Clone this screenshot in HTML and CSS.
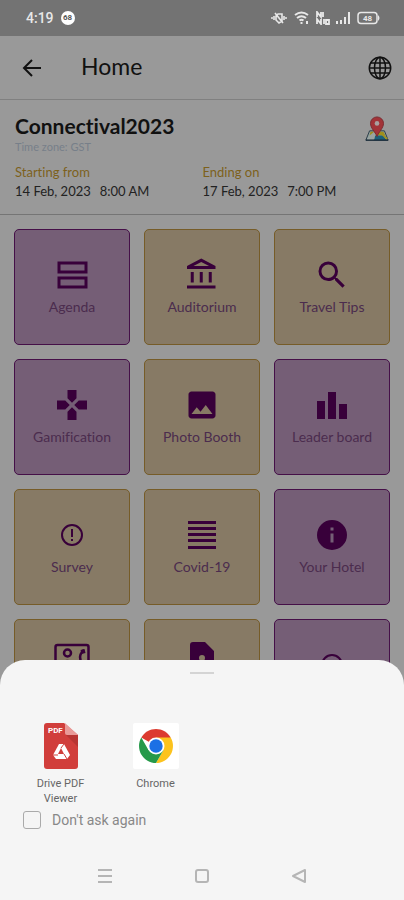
FILE: index.html
```html
<!DOCTYPE html>
<html lang="en">
<head>
<meta charset="utf-8">
<meta name="viewport" content="width=device-width, initial-scale=1">
<title>Home</title>
<link rel="stylesheet" href="styles.css">
</head>
<body>
<div class="statusbar">
  <span class="clock">4:19</span>
  <span class="notice">68</span>
  <div class="indicators">
    <svg width="18" height="14" viewBox="0 0 18 14" fill="none" stroke="currentColor" stroke-width="1.6"><path d="M1 7h2M15 7h2M4 5v4M14 5v4M8 3h4v7L9 12 6 9V5zM5 2l8 10"/></svg>
    <svg width="16" height="14" viewBox="0 0 16 14" fill="none" stroke="currentColor" stroke-width="2"><path d="M1 4q6.500-5 13 0M3 7q4.500-3.500 9 0M5.500 9.500q2-1.500 4 0M7.500 11v2M13 10v3"/></svg>
    <svg width="14" height="14" viewBox="0 0 14 14" fill="none" stroke="currentColor" stroke-width="1.8"><path d="M1 6V1l4 5V1M7 1v5M1 13V8l4 5V8M8 13V8M10 9h3v4h-3z"/></svg>
    <svg width="15" height="14" viewBox="0 0 15 14" fill="currentColor"><path d="M0 10h2v3H0zM4 9h2v4H4zM8 6h2v7H8zM12 1h2v12h-2z"/></svg>
    <svg class="battery" width="23" height="14" viewBox="0 0 23 14"><rect x="1" y="1.500" width="19" height="11" rx="3" fill="none" stroke="currentColor" stroke-width="1.500"/><path d="M21 4q3 3 0 6z" fill="currentColor"/><text x="10.500" y="10" text-anchor="middle" fill="currentColor">48</text></svg>
  </div>
</div>

<header class="appbar">
  <button class="icon-button" type="button" aria-label="Back">
    <svg width="20" height="20" viewBox="0 0 20 20" fill="none" stroke="currentColor" stroke-width="2"><path d="M19 10H2M10 2l-8 8 8 8"/></svg>
  </button>
  <h1>Home</h1>
  <button class="icon-button" type="button" aria-label="Language">
    <svg width="24" height="24" viewBox="0 0 24 24" fill="none" stroke="currentColor" stroke-width="1.5"><circle cx="12" cy="12" r="10.700"/><ellipse cx="12" cy="12" rx="5.500" ry="10.700"/><path d="M12 1v22M1 12h22M2.500 7h19M2.500 17h19"/></svg>
  </button>
</header>

<section class="event">
  <div class="event-head">
    <div>
      <h2>Connectival2023</h2>
      <p class="zone">Time zone: GST</p>
    </div>
    <button class="icon-button map" type="button" aria-label="Venue map">
      <svg width="26" height="26" viewBox="0 0 26 28"><path d="M5 16h16l4 10H1z" fill="#8fa0a0" stroke="#273743"/><path d="M6 17h14l2 4H5z" fill="#a1901c"/><path d="M5 21l5-4 3 4-4 5H2z" fill="#9aa3a0"/><path d="M11 21h9l3 5H10z" fill="#1c6078"/><path d="M16 17l8 8" stroke="#a1901c" stroke-width="2"/><path d="M1 26h24" stroke="#1d2e3c" stroke-width="1.500"/><path d="M13 22C11 17 6 13 6 8a7 7 0 0 1 14 0c0 5-5 9-7 14z" fill="#a23338" stroke="#792a30"/><circle cx="13" cy="8" r="2.500" fill="#a9a0a0"/></svg>
    </button>
  </div>
  <dl class="dates">
    <div><dt>Starting from</dt><dd><span>14 Feb, 2023</span><span>8:00 AM</span></dd></div>
    <div><dt>Ending on</dt><dd><span>17 Feb, 2023</span><span>7:00 PM</span></dd></div>
  </dl>
</section>

<main class="tiles">
  <a class="tile purple" href="#agenda"><svg viewBox="0 0 36 36" fill="none" stroke="currentColor" stroke-width="3"><rect x="5" y="6" width="27" height="9"/><rect x="5" y="21" width="27" height="9"/></svg>Agenda</a>
  <a class="tile tan" href="#auditorium"><svg viewBox="0 0 24 24"><path d="M6.500 10h-2v7h2v-7zm6 0h-2v7h2v-7zm8.500 9H2v2h19v-2zm-2.500-9h-2v7h2v-7zm-7-6.740L16.710 6H6.290l5.210-2.740m0-2.260L2 6v2h19V6l-9.500-5z"/></svg>Auditorium</a>
  <a class="tile tan" href="#travel"><svg viewBox="0 0 24 24"><path d="M15.500 14h-.79l-.28-.27A6.470 6.470 0 0 0 16 9.500 6.500 6.500 0 1 0 9.500 16c1.610 0 3.090-.59 4.230-1.570l.27.28v.79l5 4.990L20.490 19l-4.990-5zm-6 0C7.010 14 5 11.990 5 9.500S7.010 5 9.500 5 14 7.010 14 9.500 11.990 14 9.500 14z"/></svg>Travel Tips</a>
  <a class="tile purple" href="#games"><svg viewBox="0 0 24 24"><path d="M15 7.500V2H9v5.500l3 3 3-3zM7.500 9H2v6h5.500l3-3-3-3zM9 16.500V22h6v-5.500l-3-3-3 3zM16.500 9l-3 3 3 3H22V9h-5.500z"/></svg>Gamification</a>
  <a class="tile tan" href="#photos"><svg viewBox="0 0 24 24"><path d="M21 19V5c0-1.100-.9-2-2-2H5c-1.100 0-2 .9-2 2v14c0 1.100.9 2 2 2h14c1.100 0 2-.9 2-2zM8.500 13.500l2.500 3.010L14.500 12l4.500 6H5l3.500-4.500z"/></svg>Photo Booth</a>
  <a class="tile purple" href="#leaders"><svg viewBox="0 0 36 36"><path d="M3 14h8v18H3zM14 5h8v27h-8zM25 17h8v15h-8z"/></svg>Leader board</a>
  <a class="tile tan" href="#survey"><svg viewBox="0 0 36 36"><circle cx="18" cy="18" r="10" fill="none" stroke="currentColor" stroke-width="2"/><path d="M17 12h2v8h-2zM17 22h2v2h-2z"/></svg>Survey</a>
  <a class="tile tan" href="#covid"><svg viewBox="0 0 36 36"><path d="M4 4h28v3H4zM4 10h28v3H4zM4 16h28v3H4zM4 22h28v3H4zM4 29h28v3H4z"/></svg>Covid-19</a>
  <a class="tile purple" href="#hotel"><svg viewBox="0 0 24 24"><path d="M12 2a10 10 0 1 0 0 20 10 10 0 0 0 0-20zm1 15h-2v-6h2v6zm0-8h-2V7h2v2z"/></svg>Your Hotel</a>
  <a class="tile tan raised" href="#contact" aria-label="Contact"><svg viewBox="0 0 36 36" fill="none" stroke="currentColor" stroke-width="2.500"><rect x="1.500" y="6" width="33" height="25" rx="2"/><circle cx="13.500" cy="14" r="3.500"/><path d="M6 27q7-10 15 0"/><path d="M30 11l-2 2q-4 5 0 11l2 2"/><path d="M27 13l4-1" stroke-width="4"/></svg></a>
  <a class="tile tan raised" href="#documents" aria-label="Documents"><svg viewBox="0 0 36 36"><path fill-rule="evenodd" d="M9 3h12l9 9v18q0 3-3 3H9q-3 0-3-3V6q0-3 3-3zm9 13a3 3 0 1 0 0 6 3 3 0 0 0 0-6zm-6 12h12q-6-7-12 0z"/></svg></a>
  <a class="tile purple" href="#help" aria-label="Help"><svg viewBox="0 0 36 36"><circle cx="18" cy="18" r="10" fill="none" stroke="currentColor" stroke-width="2"/></svg></a>
</main>

<section class="sheet" role="dialog" aria-label="Open with">
  <div class="handle"></div>
  <div class="apps">
    <button class="app" type="button">
      <svg width="46" height="46" viewBox="0 0 46 46"><path d="M9 0h17l14 12v31q0 3-3 3H9q-3 0-3-3V3q0-3 3-3z" fill="#d13e3b"/><path d="M28 12h12v12z" fill="#b83533"/><path d="M27 0l13 12H29q-2 0-2-2z" fill="#e99a98"/><text class="pdf" x="10" y="10" fill="#fff">PDF</text><path d="M21 21h5l6 11-3 4H18l-3-4z" fill="#fff"/><path d="M23 25l3 6h-6z" fill="#d13e3b"/><path d="M26 21l-3 4M15 32h5M29 36l-3-5" stroke="#d13e3b" stroke-width="1"/></svg>
      <span>Drive PDF Viewer</span>
    </button>
    <button class="app" type="button">
      <svg width="46" height="46" viewBox="0 0 46 46"><rect width="46" height="46" rx="2" fill="#fff"/><path d="M23 23L8.300 14.500A17 17 0 0 1 37.700 14.500z" fill="#dc3b30"/><path d="M23 14.500h14.700A17 17 0 0 1 23 40l7.400-12.700z" fill="#fcc31e"/><path d="M15.600 27.300L8.300 14.500A17 17 0 0 0 23 40l7.400-12.700z" fill="#26994a"/><circle cx="23" cy="23" r="8.500" fill="#fff"/><circle cx="23" cy="23" r="6.700" fill="#1b70e5"/></svg>
      <span>Chrome</span>
    </button>
  </div>
  <label class="remember"><input type="checkbox"><span>Don't ask again</span></label>
  <nav class="system" aria-label="System">
    <button type="button" aria-label="Recent apps"><svg width="16" height="16" viewBox="0 0 16 16"><path d="M1 2h14M1 8h14M1 14h14"/></svg></button>
    <button type="button" aria-label="Home screen"><svg width="16" height="16" viewBox="0 0 16 16"><rect x="2" y="2" width="12" height="12" rx="2"/></svg></button>
    <button type="button" aria-label="Go back"><svg width="16" height="16" viewBox="0 0 16 16"><path d="M14 2v12L2 8z" stroke-linejoin="round"/></svg></button>
  </nav>
</section>
</body>
</html>
```
FILE: styles.css
```css
* { box-sizing: border-box; }

body {
  margin: 0;
  height: 100vh;
  overflow: hidden;
  background: #999;
  color: #111;
  font-family: Lato, "Liberation Sans", sans-serif;
  font-variant-ligatures: none;
}

h1, h2, p, dl, dd { margin: 0; }

button {
  padding: 0;
  border: 0;
  background: none;
  color: inherit;
  font: inherit;
}

svg { display: block; }

.statusbar {
  display: flex;
  align-items: center;
  height: 36px;
  padding: 0 24px 0 26px;
  background: #737373;
  color: #e8e8e8;
}

.clock {
  font: 500 14px/20px Roboto, sans-serif;
}

.notice {
  width: 14px;
  margin-left: 7px;
  border-radius: 50%;
  background: #fff;
  color: #555;
  font: 700 8px/14px Roboto, sans-serif;
  text-align: center;
}

.indicators {
  display: flex;
  gap: 6px;
  margin-left: auto;
}

.battery { font: 700 8px Roboto, sans-serif; }

.appbar {
  display: flex;
  align-items: center;
  height: 64px;
  padding: 0 12px 0 22px;
  border-bottom: 1px solid #808080;
}

.appbar h1 {
  flex: 1;
  margin-left: 39px;
  padding-bottom: 4px;
  font-size: 23px;
  font-weight: 400;
  line-height: 32px;
}

.event {
  padding: 13px 14px 13px 15px;
  border-bottom: 1px solid #757575;
}

.event-head {
  display: flex;
  align-items: flex-start;
  justify-content: space-between;
}

.event h2 {
  font-size: 21px;
  font-weight: 700;
  line-height: 26px;
}

.map { padding-top: 3px; }

.zone {
  color: #777f89;
  font-size: 11px;
  line-height: 16px;
}

.dates {
  display: grid;
  grid-template-columns: 1fr 1fr;
  margin-top: 8px;
  font-size: 13px;
  line-height: 19px;
}

.dates dt { color: #7d611c; }

.dates dd {
  display: flex;
  gap: 9px;
  color: #222;
}

.tiles {
  display: grid;
  grid-template-columns: repeat(3, 1fr);
  gap: 14px;
  padding: 14px;
}

.tile {
  display: flex;
  flex-direction: column;
  align-items: center;
  gap: 4px;
  aspect-ratio: 1;
  padding-top: 27px;
  border: 1px solid;
  border-radius: 5px;
  color: #4b2c4e;
  font-size: 14px;
  line-height: 20px;
  text-decoration: none;
}

.tile svg {
  width: 36px;
  height: 36px;
  color: #38003a;
}

.tile svg:not([fill]) { fill: currentColor; }

.raised { padding-top: 19px; }

.purple {
  border-color: #451048;
  background: #755e76;
}

.tan {
  border-color: #765c28;
  background: #877a65;
}

.sheet {
  position: fixed;
  right: 0;
  bottom: 0;
  left: 0;
  padding-top: 12px;
  border-radius: 25px 25px 0 0;
  background: #f5f5f5;
  color: #666;
  font-family: Roboto, sans-serif;
}

.handle {
  width: 24px;
  height: 2px;
  margin: 0 auto;
  background: #d4d4d4;
}

.apps {
  display: flex;
  gap: 14px;
  margin-top: 49px;
  padding: 0 20px;
}

.app {
  display: flex;
  flex-direction: column;
  align-items: center;
  gap: 7px;
  width: 81px;
  font-size: 11px;
  line-height: 15px;
}

.app span { max-width: 60px; }

.pdf { font: 700 8px Roboto, sans-serif; }

.remember {
  display: flex;
  align-items: center;
  gap: 11px;
  margin-top: 4px;
  padding-left: 23px;
  color: #888;
  font-size: 14px;
  line-height: 20px;
}

.remember input {
  width: 18px;
  height: 18px;
  margin: 0;
  border: 1px solid #aaa;
  border-radius: 3px;
  appearance: none;
}

.system {
  display: flex;
  justify-content: center;
  gap: 81px;
  padding: 38px 0 16px;
}

.system svg {
  fill: none;
  stroke: #b5b5b5;
  stroke-width: 2;
}
```
